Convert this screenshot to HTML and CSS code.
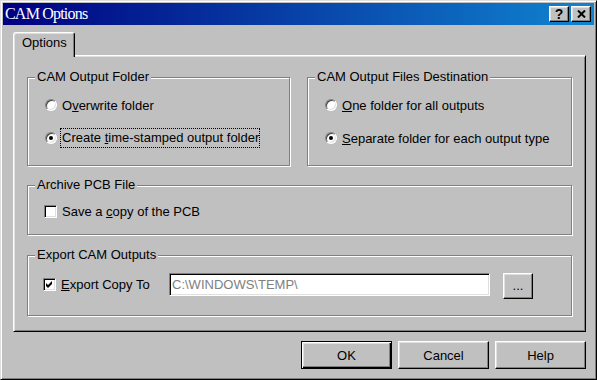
FILE: index.html
```html
<!DOCTYPE html>
<html lang="en">
<head>
    <meta charset="UTF-8">
    <title>CAM Options</title>
    <link rel="stylesheet" href="styles.css">
</head>
<body>
    <div class="window">
        <div class="titlebar">
            <span class="title">CAM Options</span>
            <div class="title-buttons">
                <span class="tbtn">?</span>
                <span class="tbtn">
                    <svg width="9" height="8" viewBox="0 0 9 8"><path d="M1 0.5 L8 7.5 M8 0.5 L1 7.5" stroke="#000" stroke-width="2"/></svg>
                </span>
            </div>
        </div>

        <div class="content">
            <div class="tabs">
                <div class="tab">Options</div>
            </div>

            <div class="panel">
                <div class="group-row">
                    <fieldset class="group">
                        <legend>CAM Output Folder</legend>
                        <div class="group-body options">
                            <label class="choice"><span class="radio"></span><span>O<u>v</u>erwrite folder</span></label>
                            <label class="choice"><span class="radio checked"></span><span class="focus">Create <u>t</u>ime-stamped output folder</span></label>
                        </div>
                    </fieldset>
                    <fieldset class="group">
                        <legend>CAM Output Files Destination</legend>
                        <div class="group-body options">
                            <label class="choice"><span class="radio"></span><span><u>O</u>ne folder for all outputs</span></label>
                            <label class="choice"><span class="radio checked"></span><span><u>S</u>eparate folder for each output type</span></label>
                        </div>
                    </fieldset>
                </div>

                <fieldset class="group archive">
                    <legend>Archive PCB File</legend>
                    <div class="group-body">
                        <label class="choice check-choice"><span class="check"></span><span>Save a <u>c</u>opy of the PCB</span></label>
                    </div>
                </fieldset>

                <fieldset class="group export">
                    <legend>Export CAM Outputs</legend>
                    <div class="group-body export-row">
                        <label class="choice check-choice export-label">
                            <span class="check">
                                <svg width="11" height="11" viewBox="0 0 11 11"><path d="M2 4 L4 6 L8 2 L8 5 L4 9 L2 7 Z" fill="#000"/></svg>
                            </span>
                            <span><u>E</u>xport Copy To</span>
                        </label>
                        <div class="field">C:\WINDOWS\TEMP\</div>
                        <button class="btn browse">...</button>
                    </div>
                </fieldset>
            </div>

            <div class="dialog-buttons">
                <button class="btn default">OK</button>
                <button class="btn">Cancel</button>
                <button class="btn">Help</button>
            </div>
        </div>
    </div>
</body>
</html>
```

FILE: styles.css
```css
body {
    margin: 0;
    font-family: "Liberation Sans", Arial, sans-serif;
    font-size: 13px;
    color: #000;
    background: #c0c0c0;
}
.window {
    width: 597px;
    height: 380px;
    box-sizing: border-box;
    background: #c0c0c0;
    border: 1px solid;
    border-color: #dfdfdf #000 #000 #dfdfdf;
    box-shadow: inset 1px 1px #fff, inset -1px -1px #808080;
    padding: 2px;
    display: flex;
    flex-direction: column;
}
.titlebar {
    height: 22px;
    display: flex;
    align-items: center;
    justify-content: space-between;
    padding: 0 3px 0 2px;
    background: linear-gradient(to right, #000080, #1084d0);
    color: #fff;
}
.title {
    font-family: "Liberation Serif", serif;
    font-size: 16px;
    letter-spacing: -0.8px;
}
.title-buttons {
    display: flex;
    gap: 2px;
}
.tbtn {
    width: 20px;
    height: 16px;
    box-sizing: border-box;
    display: flex;
    align-items: center;
    justify-content: center;
    background: #c0c0c0;
    border: 1px solid;
    border-color: #fff #000 #000 #fff;
    box-shadow: inset -1px -1px #808080, inset 1px 1px #dfdfdf;
    color: #000;
    font-weight: bold;
    font-size: 14px;
    line-height: 14px;
}
.content {
    flex: 1;
    padding: 7px 8px 0 10px;
    display: flex;
    flex-direction: column;
}
.tabs {
    display: flex;
}
.tab {
    position: relative;
    z-index: 1;
    height: 25px;
    box-sizing: border-box;
    margin-bottom: -2px;
    padding: 2px 7px 0 8px;
    border: 1px solid;
    border-bottom: 0;
    border-color: #fff #000 #000 #fff;
    border-radius: 3px 3px 0 0;
    box-shadow: inset 1px 1px #dfdfdf, inset -1px 0 #808080;
    background: #c0c0c0;
    line-height: 15px;
}
.panel {
    border: 1px solid;
    border-color: #fff #000 #000 #fff;
    box-shadow: inset 1px 1px #dfdfdf, inset -1px -1px #808080;
    padding: 14px 13px 15px 13px;
}
.group-row {
    display: grid;
    grid-template-columns: 263px 1fr;
    gap: 17px;
}
.group {
    margin: 0;
    padding: 0;
    min-width: 0;
    border: 1px solid #808080;
    box-shadow: 1px 1px #fff, inset 1px 1px #fff;
}
.group legend {
    margin-left: 7px;
    padding: 0 2px;
    line-height: 14px;
    background: #c0c0c0;
}
.group-body {
    padding: 11px 0 17px 17px;
}
.options {
    display: flex;
    flex-direction: column;
    gap: 13px;
}
.choice {
    display: flex;
    align-items: center;
    gap: 5px;
    height: 20px;
    white-space: nowrap;
}
.radio {
    position: relative;
    flex: none;
    width: 12px;
    height: 12px;
    box-sizing: border-box;
    border-radius: 50%;
    border: 1px solid;
    border-color: #808080 #fff #fff #808080;
    box-shadow: inset 1px 1px #404040, inset -1px -1px #dfdfdf;
    background: #fff;
}
.radio.checked::after {
    content: "";
    position: absolute;
    left: 3px;
    top: 3px;
    width: 4px;
    height: 4px;
    border-radius: 50%;
    background: #000;
}
.focus {
    width: 200px;
    height: 20px;
    box-sizing: border-box;
    margin-left: -2px;
    padding: 0 1px;
    border: 1px dotted #000;
    line-height: 18px;
    overflow: hidden;
}
.archive {
    margin-top: 12px;
}
.archive .group-body {
    padding: 9px 0 13px 16px;
}
.check {
    flex: none;
    width: 13px;
    height: 13px;
    box-sizing: border-box;
    border: 1px solid;
    border-color: #808080 #fff #fff #808080;
    box-shadow: inset 1px 1px #000, inset -1px -1px #dfdfdf;
    background: #fff;
}
.check svg {
    display: block;
}
.export {
    margin-top: 13px;
}
.export .group-body {
    padding: 11px 0 16px 15px;
}
.export-row {
    display: flex;
    align-items: flex-start;
}
.export-label {
    width: 126px;
    height: 23px;
}
.field {
    width: 321px;
    height: 23px;
    box-sizing: border-box;
    border: 1px solid;
    border-color: #808080 #fff #fff #808080;
    box-shadow: inset 1px 1px #000, inset -1px -1px #dfdfdf;
    background: #fff;
    color: #808080;
    padding: 0 2px;
    line-height: 21px;
}
.btn {
    font-family: inherit;
    font-size: 13px;
    color: #000;
    background: #c0c0c0;
    border: 1px solid;
    border-color: #fff #000 #000 #fff;
    box-shadow: inset -1px -1px #808080, inset 1px 1px #dfdfdf;
    padding: 0;
    margin: 0;
}
.browse {
    width: 30px;
    height: 26px;
    margin-left: 13px;
    line-height: 10px;
}
.dialog-buttons {
    display: flex;
    justify-content: flex-end;
    gap: 6px;
    margin-top: 9px;
}
.dialog-buttons .btn {
    width: 91px;
    height: 28px;
}
.dialog-buttons .default {
    border-color: #000;
    box-shadow: inset 1px 1px #fff, inset -1px -1px #000, inset -2px -2px #808080, inset 2px 2px #dfdfdf;
}
```
